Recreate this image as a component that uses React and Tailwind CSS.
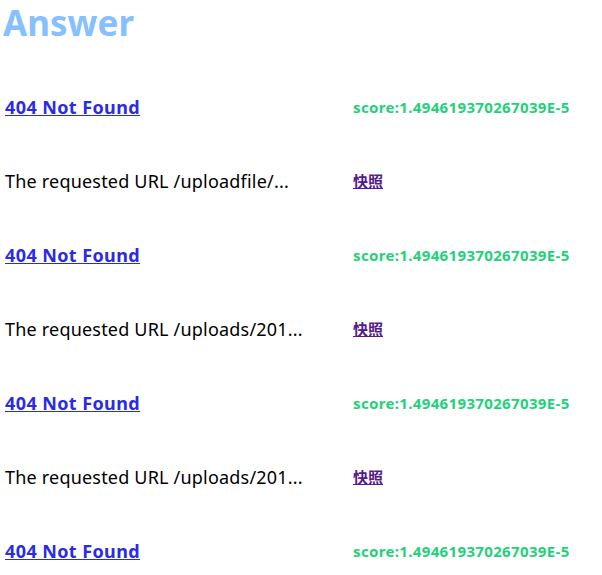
import React from "react";

const results = [
  { title: "404 Not Found", score: "score:1.494619370267039E-5", desc: "The requested URL /uploadfile/..." },
  { title: "404 Not Found", score: "score:1.494619370267039E-5", desc: "The requested URL /uploads/201..." },
  { title: "404 Not Found", score: "score:1.494619370267039E-5", desc: "The requested URL /uploads/201..." },
  { title: "404 Not Found", score: "score:1.494619370267039E-5", desc: "The requested URL /uploads/201..." },
];

const App = () => {
  return (
    <div className="bg-white min-h-[575px] font-['Noto_Sans','Noto_Sans_CJK_SC',sans-serif]">
      <h1 className="h-[70px] pl-[3px] text-[35px] leading-[46px] font-bold text-[#88bfff]">Answer</h1>
      <div className="grid grid-cols-[348px_1fr] pl-[5px]">
        {results.map((r, i) => (
          <React.Fragment key={i}>
            <div className="h-[74px] flex items-center">
              <a href="#" className="text-[18px] tracking-[0.4px] font-bold text-[#2b2be6] underline">{r.title}</a>
            </div>
            <div className="h-[74px] flex items-center">
              <span className="text-[15px] tracking-[0.35px] font-bold text-[#1fd27a]">{r.score}</span>
            </div>
            {i < results.length - 1 && (
              <>
                <div className="h-[74px] flex items-center">
                  <span className="text-[18px] tracking-[0.2px] text-black">{r.desc}</span>
                </div>
                <div className="h-[74px] flex items-center">
                  <a href="#" className="text-[15px] font-bold text-[#551a8b] underline">快照</a>
                </div>
              </>
            )}
          </React.Fragment>
        ))}
      </div>
    </div>
  );
};

export default App;
